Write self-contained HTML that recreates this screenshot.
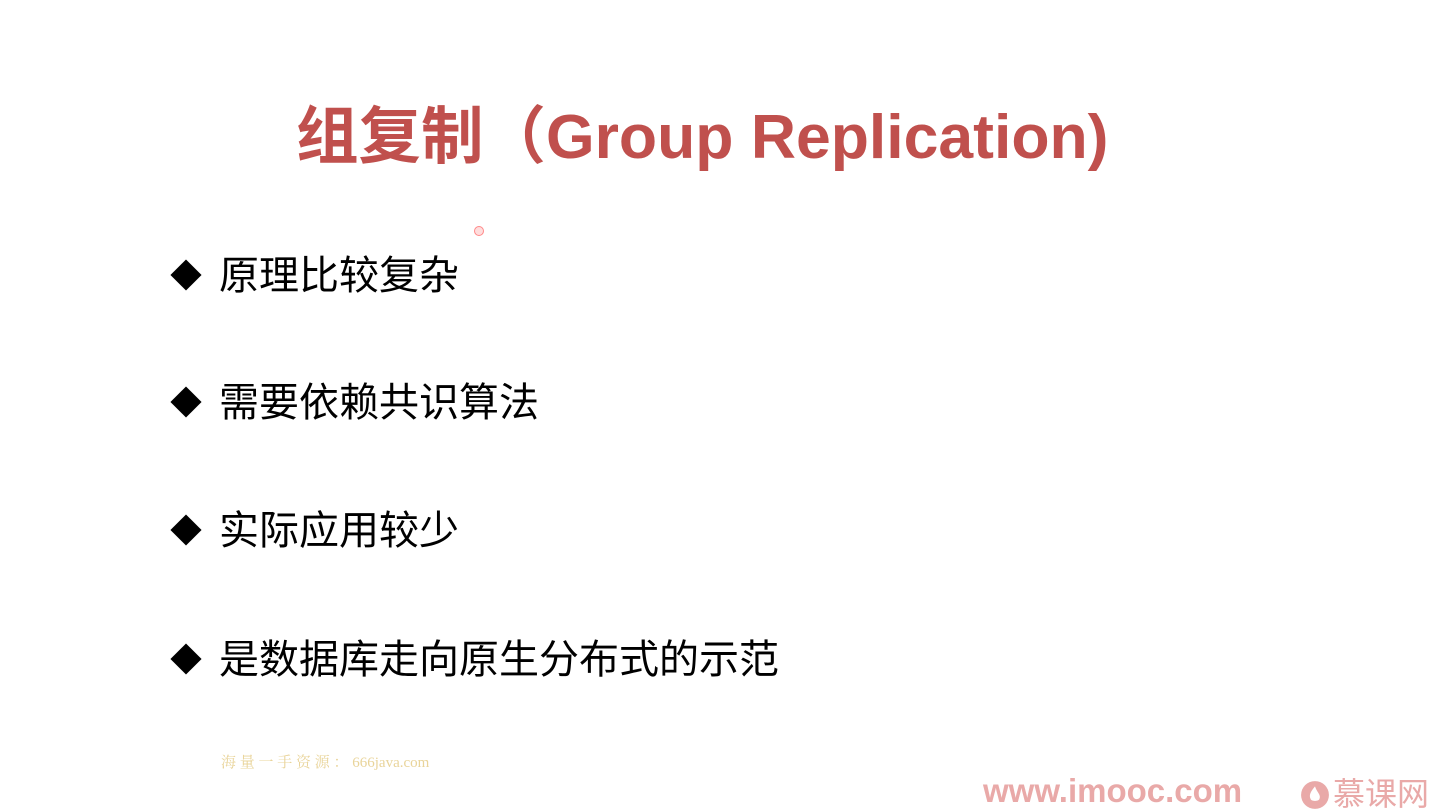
<!DOCTYPE html>
<html><head><meta charset="utf-8"><style>
html,body{margin:0;padding:0;width:1440px;height:811px;background:#fff;overflow:hidden;position:relative;font-family:"Liberation Sans","Noto Sans CJK SC",sans-serif}
.t{position:absolute;left:296px;top:97px;font-size:62.5px;font-weight:bold;color:#c0504d;white-space:nowrap;line-height:80px}
.b{position:absolute;left:170px;font-size:40px;color:#000;white-space:nowrap;line-height:50px}
.b span{display:inline-block;width:22px;height:22px;background:#000;transform:rotate(45deg);margin:0 22px 7px 5px;vertical-align:middle}
.w{position:absolute;left:221px;top:751px;font-size:15px;color:#e9d49a;font-family:"Liberation Serif","Noto Serif CJK SC",serif}
.im{position:absolute;left:983px;top:771px;font-size:33px;font-weight:bold;color:#e9a9a8;line-height:40px}
.mk{position:absolute;left:1300px;top:772px;font-size:32px;color:#e9a9a8;line-height:40px}
.dot{position:absolute;left:474px;top:226px;width:8px;height:8px;border-radius:50%;border:1px solid #f88;background:#fdd}
</style></head><body>
<div class="t">组复制（Group Replication)</div>
<div class="dot"></div>
<div class="b" style="top:251px"><span></span>原理比较复杂</div>
<div class="b" style="top:378px"><span></span>需要依赖共识算法</div>
<div class="b" style="top:506px"><span></span>实际应用较少</div>
<div class="b" style="top:635px"><span></span>是数据库走向原生分布式的示范</div>
<div class="w">海 量 一 手 资 源 ： 666java.com</div>
<div class="im">www.imooc.com</div>
<div class="mk"><svg width="30" height="30" viewBox="0 0 28 28" style="vertical-align:-5px;margin-right:3px"><circle cx="14" cy="14" r="13" fill="#e9a9a8"/><path d="M14 6c-4 5-6 8-4 12 1 2 7 2 8 0 2-4-2-6-4-12z" fill="#fff"/></svg><span style="font-family:'Noto Sans CJK SC',sans-serif">慕课网</span></div>
</body></html>
